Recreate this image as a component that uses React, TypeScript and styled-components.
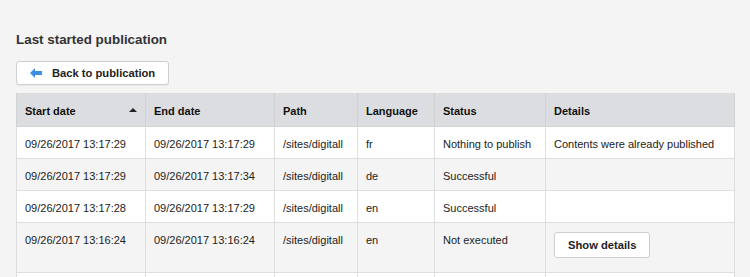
import React from "react";
import styled, { createGlobalStyle } from "styled-components";

const Global = createGlobalStyle`
  html, body { margin: 0; padding: 0; background: #f4f4f4; }
  body { font-family: "Liberation Sans", Arial, sans-serif; color: #222; }
`;

const Page = styled.div`
  padding: 31px 16px 0 16px;
  width: 718px;
`;

const Title = styled.h2`
  margin: 0 0 12px 0;
  font-size: 13.4px;
  font-weight: bold;
  color: #333;
  line-height: 18px;
`;

const Button = styled.button`
  display: inline-flex;
  align-items: center;
  gap: 9px;
  height: 24px;
  padding: 0 13px 0 13px;
  background: #fff;
  border: 1px solid #cfcfcf;
  border-radius: 3px;
  font-family: inherit;
  font-size: 11.2px;
  font-weight: bold;
  color: #222;
  box-shadow: 0 1px 1px rgba(0,0,0,0.05);
`;

const Table = styled.table`
  margin-top: 8px;
  width: 718px;
  border-collapse: collapse;
  background: #fff;
  border: 1px solid #dcdcdc;
  font-size: 11px;
  table-layout: fixed;
`;

const Col = styled.col<{ $w: number }>`
  width: ${(p) => p.$w}px;
`;

const Th = styled.th`
  height: 31px;
  background: #dcdde0;
  border: 1px solid #d2d2d2;
  border-top: none;
  text-align: left;
  padding: 1px 8px 0 8px;
  font-weight: bold;
  color: #111;
  position: relative;
`;

const Row = styled.tr<{ $alt?: boolean }>`
  background: ${(p) => (p.$alt ? "#f4f4f4" : "#fff")};
`;

const Td = styled.td`
  border: 1px solid #dedede;
  padding: 11px 8px 0 8px;
  height: 20px;
  vertical-align: top;
  line-height: 13px;
  white-space: nowrap;
  overflow: hidden;
  color: #222;
`;

const SortArrow = styled.span`
  position: absolute;
  right: 8px;
  top: 14px;
  width: 0;
  height: 0;
  border-left: 4px solid transparent;
  border-right: 4px solid transparent;
  border-bottom: 4px solid #222;
`;

const SmallButton = styled.button`
  margin: -2px 0 14px 0;
  height: 26px;
  padding: 0 13px;
  background: #fff;
  border: 1px solid #cfcfcf;
  border-radius: 3px;
  font-family: inherit;
  font-size: 11.2px;
  font-weight: bold;
  color: #222;
`;

const rows = [
  ["09/26/2017 13:17:29", "09/26/2017 13:17:29", "/sites/digitall", "fr", "Nothing to publish", "Contents were already published"],
  ["09/26/2017 13:17:29", "09/26/2017 13:17:34", "/sites/digitall", "de", "Successful", ""],
  ["09/26/2017 13:17:28", "09/26/2017 13:17:29", "/sites/digitall", "en", "Successful", ""],
  ["09/26/2017 13:16:24", "09/26/2017 13:16:24", "/sites/digitall", "en", "Not executed", "button"],
  ["", "", "", "", "", ""],
];

const widths = [129, 129, 83, 77, 111, 189];
const heads = ["Start date", "End date", "Path", "Language", "Status", "Details"];

export default function App() {
  return (
    <>
      <Global />
      <Page>
        <Title>Last started publication</Title>
        <Button>
          <svg width="13" height="10" viewBox="0 0 13 10">
            <path d="M0 5 L5 0 L5 3 L12 3 L12 7 L5 7 L5 10 Z" fill="#3d8fe3" />
          </svg>
          Back to publication
        </Button>
        <Table>
          <colgroup>
            {widths.map((w, i) => (
              <Col key={i} $w={w} />
            ))}
          </colgroup>
          <thead>
            <tr>
              {heads.map((h, i) => (
                <Th key={h}>
                  {h}
                  {i === 0 && <SortArrow />}
                </Th>
              ))}
            </tr>
          </thead>
          <tbody>
            {rows.map((r, ri) => (
              <Row key={ri} $alt={ri % 2 === 1}>
                {r.map((c, ci) => (
                  <Td key={ci}>
                    {c === "button" ? <SmallButton>Show details</SmallButton> : c}
                  </Td>
                ))}
              </Row>
            ))}
          </tbody>
        </Table>
      </Page>
    </>
  );
}
